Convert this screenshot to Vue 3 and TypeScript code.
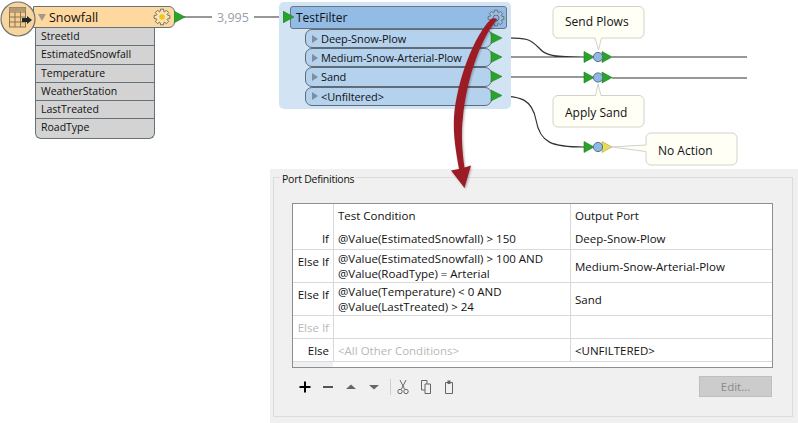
<script setup lang="ts">
const attrs: string[] = ['StreetId', 'EstimatedSnowfall', 'Temperature', 'WeatherStation', 'LastTreated', 'RoadType']
const ports: string[] = ['Deep-Snow-Plow', 'Medium-Snow-Arterial-Plow', 'Sand', '<Unfiltered>']
interface Row { label: string; cond: string[]; port: string; h: number; muted?: boolean; ghost?: boolean }
const rows: Row[] = [
  { label: 'If', cond: ['@Value(EstimatedSnowfall) > 150'], port: 'Deep-Snow-Plow', h: 22 },
  { label: 'Else If', cond: ['@Value(EstimatedSnowfall) > 100 AND', '@Value(RoadType) = Arterial'], port: 'Medium-Snow-Arterial-Plow', h: 32 },
  { label: 'Else If', cond: ['@Value(Temperature) < 0 AND', '@Value(LastTreated) > 24'], port: 'Sand', h: 32 },
  { label: 'Else If', cond: [], port: '', h: 22, muted: true },
  { label: 'Else', cond: ['<All Other Conditions>'], port: '<UNFILTERED>', h: 22, ghost: true },
]
function gear(cx: number, cy: number, ro: number, ri: number, n = 8): string {
  const pts: string[] = []
  const step = (Math.PI * 2) / n
  for (let i = 0; i < n; i++) {
    const a = i * step
    for (const [d, r] of [[-0.3, ri], [-0.17, ro], [0.17, ro], [0.3, ri]] as [number, number][]) {
      const t = a + d * step * 1.4
      pts.push(`${(cx + r * Math.cos(t)).toFixed(2)} ${(cy + r * Math.sin(t)).toFixed(2)}`)
    }
  }
  return 'M' + pts.join('L') + 'Z'
}
const tri = (x: number, y: number): string => `${x},${y - 5.5} ${x},${y + 5.5} ${x + 10},${y}`
const junctions = [57, 77.5, 147]
</script>

<template>
  <div class="page">
    <section class="canvas">
      <svg class="wires" width="798" height="169" viewBox="0 0 798 169">
        <path d="M181 17H212M254 17H282" class="wire" />
        <path d="M499 38C530 37 531 40 540 49C546 56 556 57 584 57M499 57H584M499 77H584M499 96C520 96 532 99 536 120C540 143 552 147 584 147" class="wire" />
        <path d="M612 57H747M612 78H747" class="wire" />
      </svg>

      <div class="halo"></div>

      <div class="node snow">
        <div class="snow-head">
          <span class="caret caret-down"></span>
          <span class="snow-title">Snowfall</span>
          <svg class="gear" width="18" height="18" viewBox="0 0 18 18">
            <path :d="gear(9, 9, 8, 5.8)" fill="#fbe3b8" stroke="#77705c" stroke-width="1" />
            <circle cx="9" cy="9" r="2.8" fill="#f5c21c" />
          </svg>
        </div>
        <ul class="attrs">
          <li v-for="a in attrs" :key="a">{{ a }}</li>
        </ul>
      </div>

      <div class="reader-icon">
        <svg width="36" height="38" viewBox="0 0 36 38">
          <circle cx="18" cy="19" r="17" fill="#f7d5a0" stroke="#6f7070" stroke-width="1.2" />
          <g fill="none" stroke="#8b7450" stroke-width="1">
            <rect x="9.5" y="7.5" width="16" height="19.500" fill="#f3cd93" />
            <path d="M9.500 12H25.500M9.500 17H25.500M9.500 22H25.500M15 12V27M20.500 12V27" />
          </g>
          <rect x="9.500" y="7.500" width="16" height="4" fill="#b29a78" />
          <path d="M22 18H27V16L32 20L27 24V22H22Z" fill="#22272c" />
        </svg>
      </div>

      <svg class="port-out snow-port" width="11" height="12" viewBox="0 0 11 12"><polygon points="0,0 0,12 11,6" /></svg>

      <span class="count">3,995</span>

      <div class="node filter">
        <div class="filter-head">
          <span class="filter-title">TestFilter</span>
          <svg class="gear" width="18" height="18" viewBox="0 0 18 18">
            <path :d="gear(9, 9, 8, 5.8)" fill="#9dbfe0" stroke="#66717c" stroke-width="1" />
            <circle cx="9" cy="9" r="3" fill="#8fb9e4" stroke="#66717c" />
          </svg>
        </div>
        <ul class="ports">
          <li v-for="p in ports" :key="p">
            <span class="caret caret-right"></span>
            <span>{{ p }}</span>
          </li>
        </ul>
      </div>
      <svg class="port-out filter-in" width="11" height="12" viewBox="0 0 11 12"><polygon points="0,0 0,12 11,6" /></svg>
      <svg class="out-ports" width="12" height="78" viewBox="0 0 12 78">
        <polygon v-for="y in [6, 25, 44.5, 63.5]" :key="y" :points="`1,${y - 5.5} 1,${y + 5.5} 12,${y}`" />
      </svg>

      <svg class="junctions" width="798" height="169" viewBox="0 0 798 169">
        <g class="callout">
          <path d="M558 6.5H639a5 5 0 0 1 5 5V33a5 5 0 0 1-5 5H601.5L598.5 50L595 38H558a5 5 0 0 1-5-5V11.500a5 5 0 0 1 5-5Z" />
          <path d="M598 84L595.500 95.500H558a5 5 0 0 0-5 5V122a5 5 0 0 0 5 5H639a5 5 0 0 0 5-5V100.500a5 5 0 0 0-5-5H601Z" />
          <path d="M612 147L646 145V138a5 5 0 0 1 5-5H732a5 5 0 0 1 5 5V160a5 5 0 0 1-5 5H651a5 5 0 0 1-5-5V151.500Z" />
        </g>
        <g v-for="(y, i) in junctions" :key="y">
          <polygon :points="tri(584, y)" fill="#29a329" stroke="#1c7a1c" stroke-width=".6" />
          <polygon :points="tri(602, y)" :fill="i === 2 ? '#e6dc5a' : '#29a329'" :stroke="i === 2 ? '#a8a244' : '#1c7a1c'" stroke-width=".6" />
          <circle cx="598" :cy="y" r="4.6" fill="#8fb9e4" stroke="#5c7085" />
        </g>
      </svg>
      <span class="note send">Send Plows</span>
      <span class="note sand">Apply Sand</span>
      <span class="note none">No Action</span>
    </section>

    <section class="panel">
      <fieldset class="group">
        <legend>Port Definitions</legend>
        <div class="table">
          <div class="row head">
            <div class="c-label"></div>
            <div class="c-cond">Test Condition</div>
            <div class="c-port">Output Port</div>
          </div>
          <div v-for="(r, i) in rows" :key="i" class="row" :style="{ height: r.h + 'px' }">
            <div class="c-label" :class="{ muted: r.muted }">{{ r.label }}</div>
            <div class="c-cond" :class="{ muted: r.ghost }">
              <div v-for="l in r.cond" :key="l">{{ l }}</div>
            </div>
            <div class="c-port">{{ r.port }}</div>
          </div>
          <div class="tail"><div class="tail-label"></div></div>
        </div>
        <div class="toolbar">
          <svg class="tool" width="14" height="14" viewBox="0 0 14 14"><path d="M7 1.500V12.500M1.500 7H12.500" stroke="#000" stroke-width="2" /></svg>
          <svg class="tool" width="14" height="14" viewBox="0 0 14 14"><path d="M2 7H12" stroke="#555" stroke-width="2" /></svg>
          <svg class="tool" width="14" height="14" viewBox="0 0 14 14"><path d="M2 9L7 4.500L12 9Z" fill="#666" /></svg>
          <svg class="tool" width="14" height="14" viewBox="0 0 14 14"><path d="M2 5L7 9.500L12 5Z" fill="#666" /></svg>
          <span class="sep"></span>
          <svg class="tool" width="14" height="16" viewBox="0 0 14 16"><path d="M4 1L8.500 10M10 1L5.500 10" stroke="#666" fill="none" /><circle cx="4" cy="12.500" r="2.200" fill="none" stroke="#666" /><circle cx="10" cy="12.500" r="2.200" fill="none" stroke="#666" /></svg>
          <svg class="tool" width="14" height="16" viewBox="0 0 14 16"><path d="M2.500 1.500H8V11H2.500Z" fill="none" stroke="#666" /><path d="M6 5H11.500V14.500H6Z" fill="#f0f0f0" stroke="#666" /></svg>
          <svg class="tool" width="14" height="16" viewBox="0 0 14 16"><path d="M3.500 3.500H10.500V14.500H3.500Z" fill="none" stroke="#666" /><path d="M5.500 1.500H8.500V5H5.500Z" fill="#666" /></svg>
          <button class="edit" type="button" disabled>Edit...</button>
        </div>
      </fieldset>
    </section>

    <svg class="arrow" width="798" height="200" viewBox="0 0 798 200">
      <defs>
        <filter id="soft" x="-30%" y="-10%" width="160%" height="120%">
          <feDropShadow dx="1" dy="1" stdDeviation="1.200" flood-color="#000" flood-opacity=".3" />
        </filter>
      </defs>
      <path d="M491 19C474 36 457 80 454 117C453 135 456 152 459 169L451 170.500L464.500 188L471 165.500L464.500 167.500C462 150 461 132 463 117C466 85 478 42 497 19.500C495.500 18 493 18 491 19Z" fill="#9c1b25" filter="url(#soft)" />
    </svg>
  </div>
</template>

<style scoped>
.page {
  position: relative;
  width: 798px;
  height: 423px;
  overflow: hidden;
  background: #fff;
  font-family: "Open Sans", "Noto Sans", sans-serif;
  font-size: 11.5px;
  color: #111;
}
.canvas {
  position: relative;
  height: 169px;
}
.wires, .junctions {
  position: absolute;
  left: 0;
  top: 0;
}
.wire {
  fill: none;
  stroke: #333;
  stroke-width: 1.2;
}
.callout path {
  fill: #fffff6;
  stroke: #d2d2ca;
  stroke-width: 1;
}
.halo {
  position: absolute;
  left: 279px;
  top: 2px;
  width: 232px;
  height: 107px;
  border-radius: 5px;
  background: #d2e3f4;
}
.node {
  position: absolute;
}
.snow {
  left: 33px;
  top: 6px;
  width: 142px;
}
.snow-head {
  display: flex;
  align-items: center;
  height: 22px;
  padding: 0 3px 0 4px;
  box-sizing: border-box;
  background: #ffd89f;
  border: 1px solid #65727a;
  border-radius: 0 6px 6px 0;
}
.snow-title {
  margin-left: 3px;
  font-size: 12.500px;
  flex: 1;
}
.caret {
  display: inline-block;
  width: 0;
  height: 0;
}
.caret-down {
  border-left: 4.500px solid transparent;
  border-right: 4.500px solid transparent;
  border-top: 7px solid #a09a8c;
}
.caret-right {
  border-top: 4.500px solid transparent;
  border-bottom: 4.500px solid transparent;
  border-left: 6.500px solid #7f8d9c;
  margin-right: 3px;
  flex: none;
}
.gear {
  flex: none;
}
.attrs {
  list-style: none;
  margin: 0 0 0 2px;
  padding: 0;
  width: 120px;
  box-sizing: border-box;
  border: 1px solid #65727a;
  border-top: 0;
  border-radius: 0 0 6px 6px;
  background: #d3d3d3;
}
.attrs li {
  height: 18.300px;
  line-height: 17px;
  padding-left: 5px;
  box-sizing: border-box;
  border-bottom: 1px solid #65727a;
  font-size: 10.500px;
}
.attrs li:last-child {
  border-bottom: 0;
}
.reader-icon {
  position: absolute;
  left: 0;
  top: 0;
  height: 38px;
}
.port-out polygon, .out-ports polygon {
  fill: #29a329;
  stroke: #1c7a1c;
  stroke-width: .5;
}
.port-out, .out-ports {
  position: absolute;
}
.snow-port {
  left: 174px;
  top: 11px;
}
.count {
  position: absolute;
  left: 217px;
  top: 9px;
  font-size: 12.500px;
  color: #96a0aa;
}
.filter {
  left: 290px;
  top: 6px;
  width: 217px;
}
.filter-head {
  display: flex;
  align-items: center;
  justify-content: space-between;
  height: 23px;
  padding: 0 1px 0 5px;
  box-sizing: border-box;
  background: #92bce6;
  border: 1px solid #6a7580;
  border-radius: 3px;
}
.filter-title {
  font-size: 12px;
}
.ports {
  list-style: none;
  margin: 0 0 0 15px;
  padding: 0;
  width: 187px;
}
.ports li {
  display: flex;
  align-items: center;
  height: 19.200px;
  box-sizing: border-box;
  padding-left: 6px;
  background: #b4d1ee;
  border: 1px solid #5f6b75;
  border-radius: 7px;
  font-size: 11px;
  letter-spacing: -.1px;
}
.filter-in {
  left: 283px;
  top: 11px;
}
.out-ports {
  left: 490px;
  top: 32px;
}
.note {
  position: absolute;
  font-size: 12px;
  color: #111;
}
.send { left: 565px; top: 13px; }
.sand { left: 565px; top: 104px; }
.none { left: 658px; top: 142px; }
.panel {
  margin-left: 270px;
  height: 254px;
  background: #f0f0f0;
  padding: 8px 5px 5px 3px;
  box-sizing: border-box;
}
.group {
  margin: 0;
  height: 240px;
  box-sizing: border-box;
  border: 1px solid #dcdcdc;
  padding: 25px 19px 0 18px;
  position: relative;
}
legend {
  position: absolute;
  top: -7px;
  left: 6px;
  padding: 0 2px;
  background: #f0f0f0;
  font-size: 10.500px;
  letter-spacing: -.25px;
  line-height: 16px;
}
.table {
  height: 165px;
  box-sizing: border-box;
  border: 1px solid #8a8f96;
  background: #fff;
  display: flex;
  flex-direction: column;
}
.row {
  display: grid;
  grid-template-columns: 40px 237px 1fr;
  border-bottom: 1px solid #d9d9d9;
  flex: none;
}
.row.head {
  height: 23px;
  border-bottom: 0;
  align-items: start;
}
.head > div {
  line-height: 24px;
  padding-left: 4px;
  height: 23px;
  box-sizing: border-box;
}
.c-label {
  text-align: right;
  padding-right: 4px;
  align-self: start;
  line-height: 23px;
}
.row:not(.head) .c-cond, .row:not(.head) .c-port {
  display: flex;
  flex-direction: column;
  justify-content: center;
  padding-left: 4px;
  line-height: 15px;
  height: 100%;
  box-sizing: border-box;
}
.c-cond, .c-port {
  border-left: 1px solid #d9d9d9;
}
.muted {
  color: #b8b8b8;
}
.tail {
  flex: 1;
}
.tail-label {
  width: 40px;
  height: 100%;
  background: #f0f0f0;
}
.toolbar {
  display: flex;
  align-items: center;
  height: 21px;
  margin-top: 8px;
  padding-left: 6px;
  gap: 9px;
}
.tool {
  flex: none;
}
.sep {
  width: 1px;
  height: 16px;
  background: #cfcfcf;
  margin-right: -4px;
}
.edit {
  margin-left: auto;
  margin-right: 1px;
  width: 73px;
  height: 21px;
  background: #cccccc;
  border: 1px solid #bfbfbf;
  color: #8a8a8a;
  font: inherit;
  padding: 0;
}
.arrow {
  position: absolute;
  left: 0;
  top: 0;
  pointer-events: none;
}
</style>
